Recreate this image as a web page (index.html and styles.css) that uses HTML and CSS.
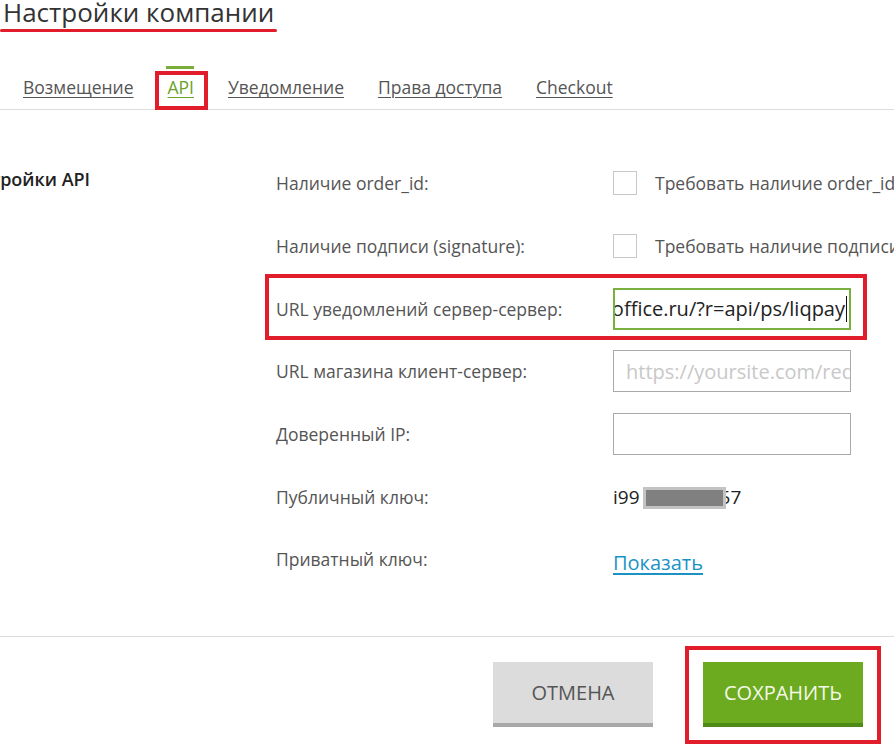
FILE: index.html
```html
<!DOCTYPE html>
<html lang="ru">
<head>
<meta charset="utf-8">
<title>Настройки компании</title>
<link rel="stylesheet" href="styles.css">
</head>
<body>
<div class="page">
  <h1 class="title">Настройки компании</h1>
  <nav class="tabs">
    <a class="tab" href="#">Возмещение</a>
    <a class="tab active" href="#">API</a>
    <a class="tab" href="#">Уведомление</a>
    <a class="tab" href="#">Права доступа</a>
    <a class="tab" href="#">Checkout</a>
  </nav>
  <section class="content">
    <div class="section-title">Настройки API</div>
    <div class="label r1">Наличие order_id:</div>
    <div class="value r1"><span class="checkbox"></span><span class="check-text">Требовать наличие order_id</span></div>
    <div class="label r2">Наличие подписи (signature):</div>
    <div class="value r2"><span class="checkbox"></span><span class="check-text">Требовать наличие подписи (signature)</span></div>
    <div class="label r3">URL уведомлений сервер-сервер:</div>
    <div class="value r3"><div class="input focused"><span class="input-text">https://shop.retailoffice.ru/?r=api/ps/liqpay</span></div></div>
    <div class="label r4">URL магазина клиент-сервер:</div>
    <div class="value r4"><div class="input"><span class="placeholder">https://yoursite.com/redirect</span></div></div>
    <div class="label r5">Доверенный IP:</div>
    <div class="value r5"><div class="input"></div></div>
    <div class="label r6">Публичный ключ:</div>
    <div class="value r6 key"><span>i99</span><span class="redact"></span><span>57</span></div>
    <div class="label r7">Приватный ключ:</div>
    <div class="value r7"><a class="show-link" href="#">Показать</a></div>
  </section>
  <footer class="actions">
    <button class="btn btn-cancel">Отмена</button>
    <button class="btn btn-save">Сохранить</button>
  </footer>

  <div class="mark mark-underline"></div>
  <div class="mark mark-box mark-api"></div>
  <div class="mark mark-box mark-url"></div>
  <div class="mark mark-box mark-save"></div>
</div>
</body>
</html>
```

FILE: styles.css
```css
html, body {
  margin: 0;
  padding: 0;
  background: #fff;
}
body {
  font-family: "Open Sans", "Liberation Sans", sans-serif;
  color: #555;
}
.page {
  position: relative;
  width: 894px;
  height: 756px;
  overflow: hidden;
  white-space: nowrap;
}
.title {
  margin: -3px 0 0 0;
  padding-left: 3px;
  font-size: 26px;
  font-weight: 400;
  line-height: 31px;
  color: #333;
}
.tabs {
  display: flex;
  align-items: flex-start;
  gap: 34px;
  padding: 38px 0 0 23px;
  border-bottom: 1px solid #dcdcdc;
}
.tab {
  display: block;
  border-top: 3px solid transparent;
  padding: 4px 0 8px;
  font-size: 17.5px;
  line-height: 28px;
  color: #555;
  text-decoration: underline;
  text-underline-offset: 3px;
  text-decoration-thickness: 1px;
}
.tab.active {
  color: #6aa329;
  border-top-color: #78ad3a;
  margin-left: -2px;
  padding-left: 2px;
}
.content {
  display: grid;
  grid-template-columns: 276px 337px 1fr;
  grid-auto-rows: 62.67px;
  padding: 42px 0 45px;
  border-bottom: 1px solid #dcdcdc;
}
.section-title {
  grid-column: 1;
  grid-row: 1;
  margin-left: -42px;
  padding-top: 15px;
  font-size: 18px;
  font-weight: 600;
  color: #222;
}
.label {
  grid-column: 2;
  display: flex;
  align-items: center;
  font-size: 17.5px;
  color: #555;
}
.value {
  grid-column: 3;
  display: flex;
  align-items: center;
  overflow: visible;
  font-size: 17.5px;
}
.r1 { grid-row: 1; }
.r2 { grid-row: 2; }
.r3 { grid-row: 3; }
.r4 { grid-row: 4; }
.r5 { grid-row: 5; }
.r6 { grid-row: 6; }
.r7 { grid-row: 7; }
.checkbox {
  width: 22px;
  height: 22px;
  border: 1px solid #c8c8c8;
  background: #fff;
  flex: none;
}
.check-text {
  margin-left: 18px;
  font-size: 17.5px;
  color: #555;
}
.input {
  box-sizing: border-box;
  width: 238px;
  height: 42px;
  border: 1px solid #aaa;
  background: #fff;
  display: flex;
  align-items: center;
  overflow: hidden;
  padding: 0 12px;
  font-size: 20px;
}
.input.focused {
  border: 2px solid #7ab040;
  justify-content: flex-end;
  padding: 0 2px 0 4px;
  color: #222;
}
.input-text {
  border-right: 1px solid #111;
  padding-right: 1px;
  line-height: 26px;
}
.placeholder {
  color: #c8c8c8;
}
.key {
  color: #222;
  font-size: 19px;
}
.redact {
  position: relative;
  z-index: 1;
  box-sizing: border-box;
  width: 83px;
  height: 22px;
  margin: 3px -6px 0 3px;
  background: #808080;
  border: 3px solid #c3c3c3;
}
.show-link {
  margin-top: 7px;
  font-size: 20px;
  color: #1a93c4;
  text-decoration: underline;
  text-underline-offset: 3px;
}
.actions {
  display: flex;
  justify-content: flex-end;
  gap: 50px;
  padding: 25px 31px 0 0;
}
.btn {
  box-sizing: border-box;
  width: 160px;
  height: 65px;
  border: none;
  font-family: "Open Sans", "Liberation Sans", sans-serif;
  font-size: 20px;
  text-transform: uppercase;
  cursor: pointer;
  padding: 0;
}
.btn-cancel {
  background: #dcdcdc;
  color: #555;
  border-bottom: 4px solid #a8a8a8;
}
.btn-save {
  background: #6caa1f;
  color: #f4f8e8;
  border-bottom: 4px solid #4e8a16;
}
.mark {
  position: absolute;
  box-sizing: border-box;
}
.mark-underline {
  left: 0;
  top: 29px;
  width: 277px;
  height: 3px;
  background: #e21d2b;
  border-radius: 2px;
}
.mark-box {
  border: 4px solid #e21d2b;
}
.mark-api {
  left: 155px;
  top: 71px;
  width: 53px;
  height: 39px;
}
.mark-url {
  left: 265px;
  top: 274px;
  width: 602px;
  height: 66px;
}
.mark-save {
  left: 685px;
  top: 646px;
  width: 196px;
  height: 98px;
}
```
